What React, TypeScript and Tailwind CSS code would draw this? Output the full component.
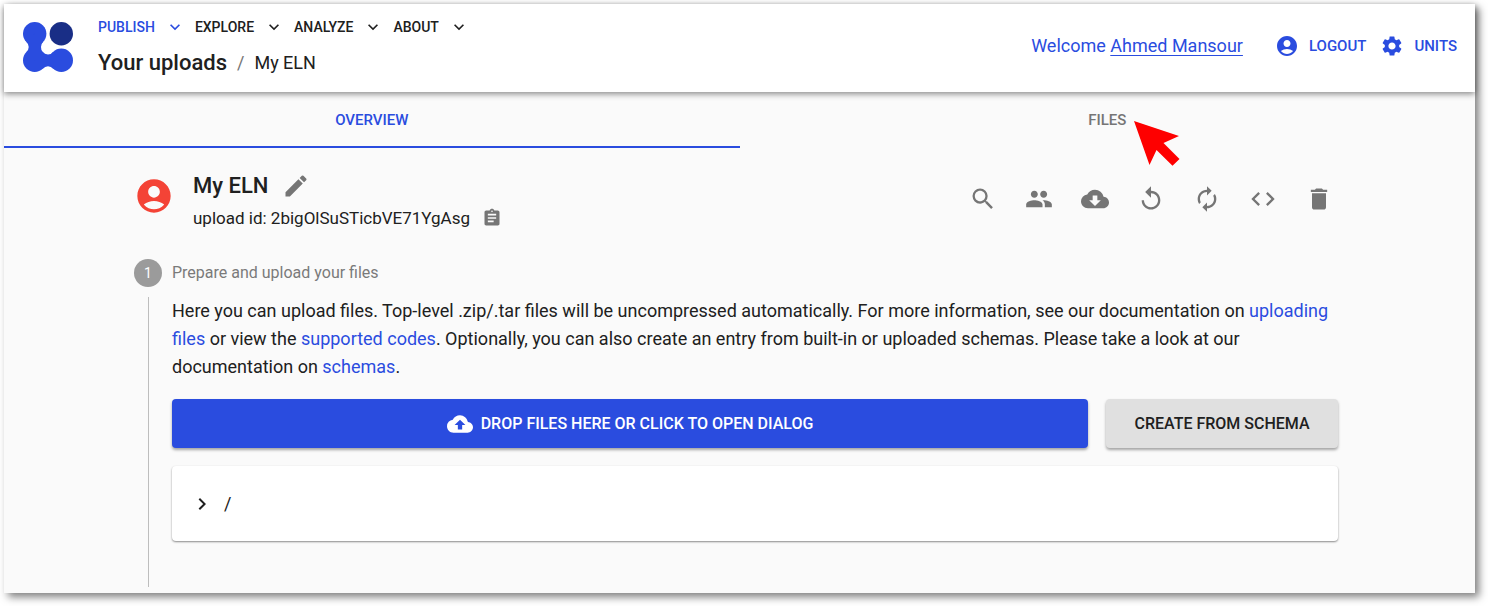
import type { ReactNode } from 'react'
import {
  MdAccountCircle,
  MdAssignment,
  MdAutorenew,
  MdChevronRight,
  MdCloudDownload,
  MdCloudUpload,
  MdCode,
  MdDelete,
  MdEdit,
  MdExpandMore,
  MdPeople,
  MdReplay,
  MdSearch,
  MdSettings,
} from 'react-icons/md'

function Logo() {
  return (
    <svg viewBox="0 0 50 50" className="size-[50px] shrink-0" aria-hidden="true">
      <g fill="#2a4cdf">
        <circle cx="11.7" cy="11.7" r="11.7" />
        <circle cx="11.7" cy="38.3" r="11.7" />
        <circle cx="38.3" cy="38.3" r="11.7" />
        <path d="M3.2 19.8Q5.7 22 5.7 25Q5.7 28 3.2 30.2L11.7 38.3L19.8 46.8Q22 44.3 25 44.3Q28 44.3 30.2 46.8L38.3 38.3L30 30Q28 32.5 25 32.5Q18 32 18 25Q18 22 20.2 19.8L11.7 11.7Z" />
      </g>
      <circle cx="38.3" cy="11.7" r="11.7" fill="#192e86" />
    </svg>
  )
}

function MenuItem({ label, active = false }: { label: string; active?: boolean }) {
  return (
    <button
      type="button"
      className={`flex items-center gap-2.5 text-sm leading-6 font-medium ${active ? 'text-[#2a4cdf]' : 'text-[#202020]'}`}
    >
      {label}
      <MdExpandMore className="size-5" />
    </button>
  )
}

function Tool({ label, children }: { label: string; children: ReactNode }) {
  return (
    <button type="button" aria-label={label} className="text-[28px] text-[#757575]">
      {children}
    </button>
  )
}

function Link({ children }: { children: ReactNode }) {
  return (
    <a href="#docs" className="text-[#2a4cdf]">
      {children}
    </a>
  )
}

export default function App() {
  return (
    <div className="bg-white pt-1 pr-[13px] pb-[13px] pl-1 font-['Roboto',sans-serif] text-[#202020]">
      <div className="bg-[#fafafa] shadow-[4px_4px_8px_rgba(0,0,0,0.5)]">
        <header className="relative flex h-[88px] items-center justify-between bg-white pr-[18px] pb-0.5 pl-[19px] shadow-[0_2px_6px_rgba(0,0,0,0.45)]">
          <div className="flex items-center gap-[25px]">
            <Logo />
            <div className="pb-0.5">
              <nav className="flex gap-2.5">
                <MenuItem label="PUBLISH" active />
                <MenuItem label="EXPLORE" />
                <MenuItem label="ANALYZE" />
                <MenuItem label="ABOUT" />
              </nav>
              <div className="mt-2.5 flex items-center gap-2.5 leading-7">
                <h1 className="text-[22px] font-medium">Your uploads</h1>
                <span className="text-lg text-[#757575]">/</span>
                <span className="text-lg">My ELN</span>
              </div>
            </div>
          </div>
          <div className="flex items-center pb-0.5 text-[#2a4cdf]">
            <p className="mr-8 text-lg">
              Welcome{' '}
              <a href="#profile" className="underline decoration-1 underline-offset-3">
                Ahmed Mansour
              </a>
            </p>
            <button type="button" className="mr-3.5 flex items-center gap-2.5 text-[15px] font-medium">
              <MdAccountCircle className="size-6" />
              LOGOUT
            </button>
            <button type="button" className="flex items-center gap-2.5 text-[15px] font-medium">
              <MdSettings className="size-6" />
              UNITS
            </button>
          </div>
        </header>

        <div role="tablist" className="grid grid-cols-2 text-[15px] font-medium">
          <button
            type="button"
            role="tab"
            aria-selected="true"
            className="h-14 border-b-2 border-[#2a4cdf] pt-0.5 text-[#2a4cdf]"
          >
            OVERVIEW
          </button>
          <button
            type="button"
            role="tab"
            aria-selected="false"
            className="h-14 border-b-2 border-transparent pt-0.5 text-[#757575]"
          >
            <span className="relative">
              FILES
              <svg
                viewBox="0 0 46 46"
                className="absolute top-2.5 left-full ml-2 size-[46px]"
                aria-hidden="true"
              >
                <path d="M0 0L45 15L29.5 22L45.5 38L38.5 44.8L22.5 29L15.5 44Z" fill="#fe0000" />
              </svg>
            </span>
          </button>
        </div>

        <main className="pt-[22px] pr-[137px] pb-1.5 pl-[130px]">
          <div className="flex items-start justify-between">
            <div className="flex items-start gap-[19px]">
              <MdAccountCircle className="mt-1.5 size-10 text-[#f44336]" />
              <div>
                <div className="flex items-center gap-3.5">
                  <h2 className="text-[22px] leading-8 font-medium">My ELN</h2>
                  <button type="button" aria-label="Edit name" className="text-[#757575]">
                    <MdEdit className="size-7" />
                  </button>
                </div>
                <div className="flex items-center gap-3 text-[17px] leading-8">
                  <p>upload id: 2bigOlSuSTicbVE71YgAsg</p>
                  <button type="button" aria-label="Copy upload id" className="text-[#757575]">
                    <MdAssignment className="size-5" />
                  </button>
                </div>
              </div>
            </div>
            <div className="flex gap-7 pt-[15px] pr-[5px]">
              <Tool label="Search"><MdSearch /></Tool>
              <Tool label="Manage members"><MdPeople /></Tool>
              <Tool label="Download"><MdCloudDownload /></Tool>
              <Tool label="Reload"><MdReplay /></Tool>
              <Tool label="Reprocess"><MdAutorenew /></Tool>
              <Tool label="Show API"><MdCode /></Tool>
              <Tool label="Delete"><MdDelete /></Tool>
            </div>
          </div>

          <section className="mt-[25px]">
            <div className="flex items-center gap-2.5">
              <span className="flex size-7 items-center justify-center rounded-full bg-[#9b9b9b] text-sm text-white">
                1
              </span>
              <h3 className="text-[#7a7a7a]">Prepare and upload your files</h3>
            </div>
            <div className="mt-2.5 ml-3.5 border-l border-[#bdbdbd] pb-[46px] pl-[23px]">
              <p className="text-lg leading-7">
                Here you can upload files. Top-level .zip/.tar files will be uncompressed
                automatically. For more information, see our documentation on{' '}
                <Link>uploading files</Link> or view the <Link>supported codes</Link>. Optionally,
                you can also create an entry from built-in or uploaded schemas. Please take a look
                at our documentation on <Link>schemas</Link>.
              </p>
              <div className="mt-[18px] flex gap-[18px] font-medium">
                <button
                  type="button"
                  className="flex h-[49px] flex-1 items-center justify-center gap-2 rounded bg-[#2a4cdf] text-white shadow-[0_2px_3px_rgba(0,0,0,0.35)]"
                >
                  <MdCloudUpload className="size-[26px]" />
                  DROP FILES HERE OR CLICK TO OPEN DIALOG
                </button>
                <button
                  type="button"
                  className="h-[49px] w-[232px] rounded bg-[#e0e0e0] shadow-[0_2px_3px_rgba(0,0,0,0.35)]"
                >
                  CREATE FROM SCHEMA
                </button>
              </div>
              <div className="mt-[18px] flex h-[75px] items-center gap-2.5 rounded bg-white pl-[18px] text-lg shadow-[0_1px_2px_rgba(0,0,0,0.45)]">
                <button type="button" aria-label="Expand folder">
                  <MdChevronRight className="size-6" />
                </button>
                <span>/</span>
              </div>
            </div>
          </section>
        </main>
      </div>
    </div>
  )
}
